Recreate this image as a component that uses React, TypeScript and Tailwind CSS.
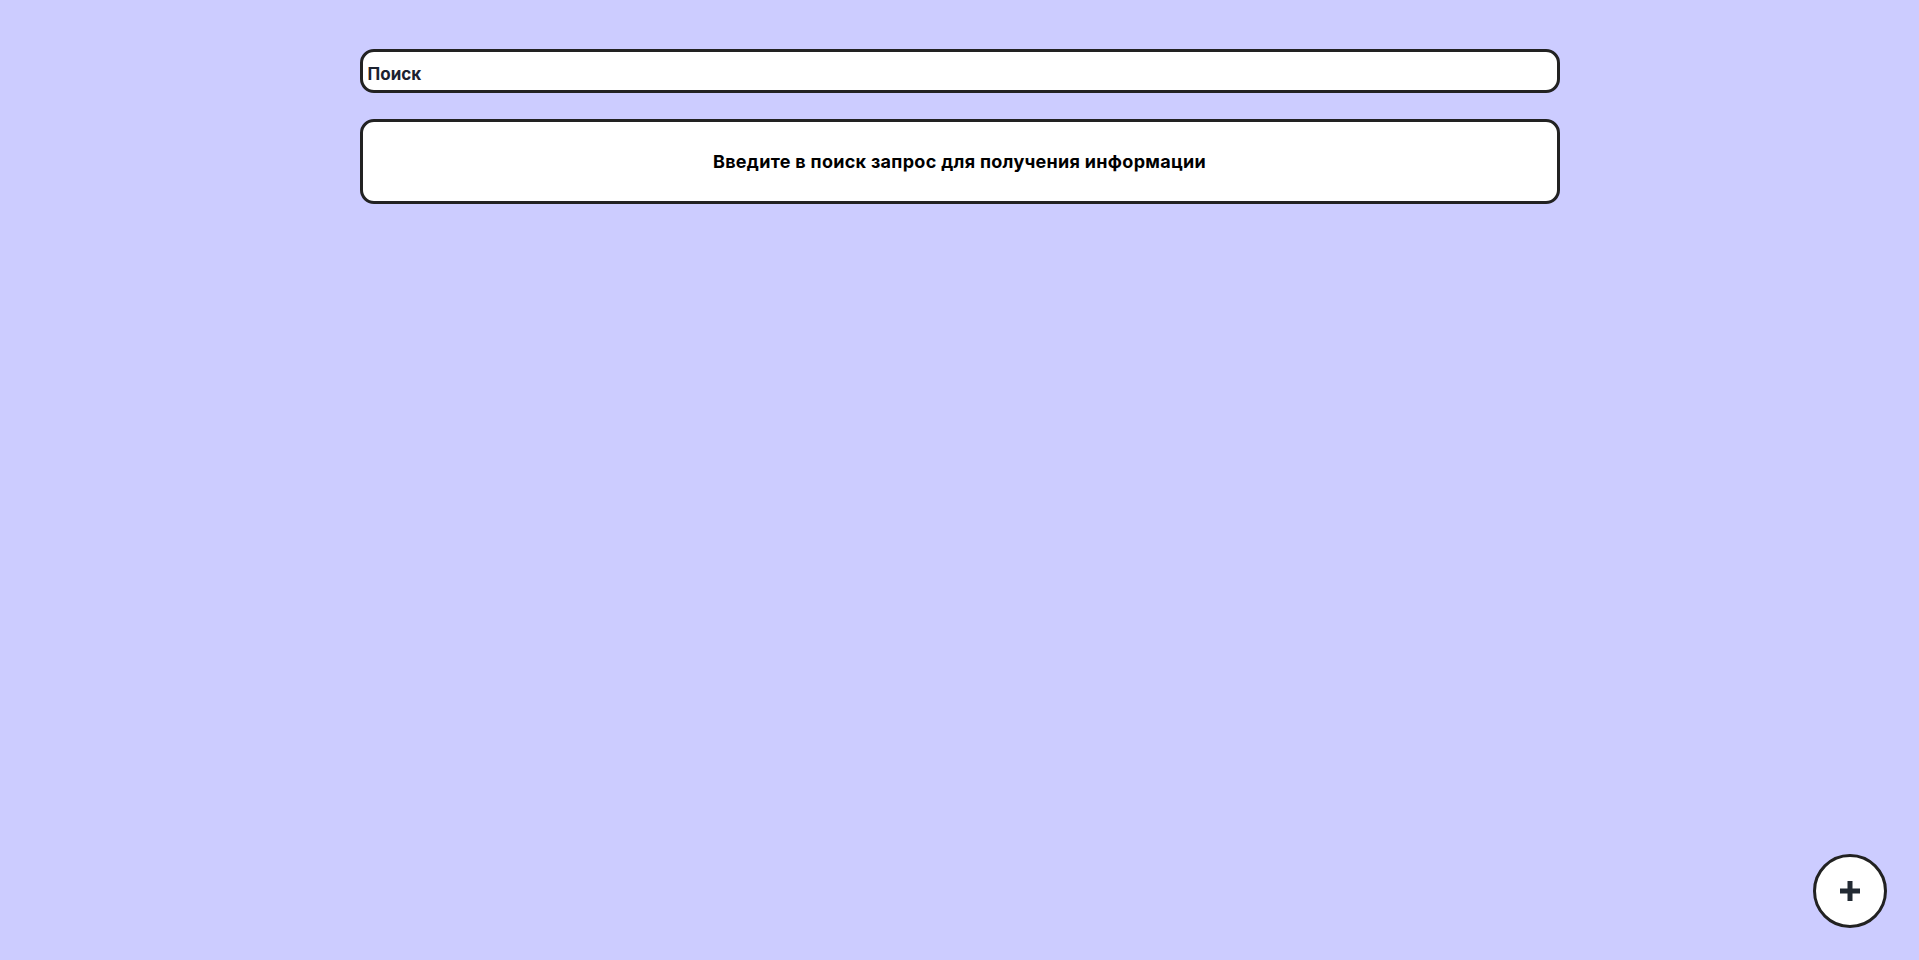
import React from "react";

export default function App() {
  return (
    <div className="min-h-screen w-full bg-[#ccccff] font-['Inter',sans-serif]">
      <div className="mx-auto flex w-[1200px] flex-col gap-[26px] pt-[49px]">
        <div className="flex h-[44px] items-start rounded-[14px] border-[3px] border-[#222222] bg-white px-[5px] pt-[13px]">
          <input
            className="h-[19px] w-full bg-transparent text-[17px] leading-[19px] font-bold text-[#1c2230] outline-none placeholder:text-[#1c2230]"
            placeholder="Поиск"
          />
        </div>
        <div className="flex h-[85px] items-center justify-center rounded-[14px] border-[3px] border-[#222222] bg-white">
          <p className="text-[18px] font-bold tracking-[0.3px] text-black">Введите в поиск запрос для получения информации</p>
        </div>
      </div>
      <button className="fixed bottom-[32px] right-[32px] flex h-[74px] w-[74px] items-center justify-center rounded-full border-[3px] border-[#222222] bg-white">
        <svg width="20" height="20" viewBox="0 0 20 20">
          <rect x="0" y="7.5" width="20" height="5" fill="#222a33" />
          <rect x="7.5" y="0" width="5" height="20" fill="#222a33" />
        </svg>
      </button>
    </div>
  );
}
